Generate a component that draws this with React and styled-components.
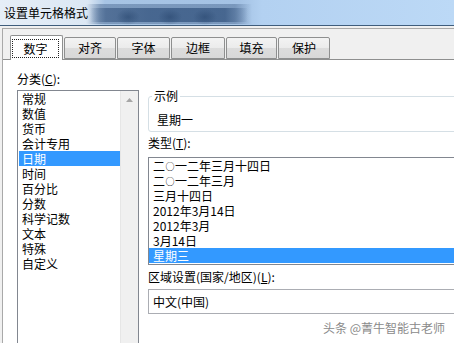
import React from 'react';
import styled, { createGlobalStyle } from 'styled-components';

const Global = createGlobalStyle`
  html, body { margin: 0; padding: 0; }
  body {
    width: 454px; height: 343px; overflow: hidden; background: #f0f0f0;
    font-family: "Noto Sans CJK SC", "Microsoft YaHei", sans-serif;
    font-size: 12px; color: #000;
  }
`;

const Window = styled.div`
  position: relative;
  width: 454px; height: 343px; overflow: hidden;
  display: flex; flex-direction: column; background: #f0f0f0;
`;

const TitleBar = styled.div`
  flex: none; height: 25px; display: flex; align-items: center; padding-left: 4px;
  border-bottom: 1px solid #3f5d7c;
  background-color: #bcd9f6;
  background-image:
    radial-gradient(ellipse 12px 8px at 128px 17px, rgba(40,70,110,0.55), rgba(40,70,110,0)),
    radial-gradient(ellipse 12px 8px at 170px 17px, rgba(40,70,110,0.55), rgba(40,70,110,0)),
    radial-gradient(ellipse 12px 8px at 205px 17px, rgba(40,70,110,0.55), rgba(40,70,110,0)),
    linear-gradient(90deg, rgba(70,100,140,0) 90px, rgba(70,100,140,0.75) 106px, rgba(62,94,136,0.85) 150px, rgba(62,94,136,0.85) 225px, rgba(70,100,140,0) 248px),
    linear-gradient(90deg, rgba(70,100,140,0) 86px, rgba(70,100,140,0.45) 100px, rgba(70,100,140,0.45) 235px, rgba(70,100,140,0) 252px),
    linear-gradient(90deg, #e6eef7 0px, #dbe7f4 88px, #a7c4e4 105px, #a4c2e4 240px, #b3d1f1 262px, #bcd9f6 100%);
  background-size: 100% 100%, 100% 100%, 100% 100%, 100% 14px, 100% 20px, 100% 100%;
  background-position: 0 0, 0 0, 0 0, 0 8px, 0 4px, 0 0;
  background-repeat: no-repeat;
`;

const Title = styled.span`
  font-size: 12px; line-height: 16px; color: #000;
`;

const Frame = styled.div`
  flex: 1; display: flex; flex-direction: column;
  margin: 2px 0 0 2px;
  border-top: 1px solid #a9a9a9; border-left: 1px solid #a9a9a9;
`;

const TabStrip = styled.div`
  flex: none; height: 30px; display: flex; align-items: flex-end; gap: 1px;
  padding-left: 7px; position: relative; z-index: 1;
`;

const Tab = styled.div`
  box-sizing: border-box;
  width: ${p => p.$w}px;
  height: ${p => (p.$active ? 25 : 22)}px;
  margin-bottom: ${p => (p.$active ? -1 : 0)}px;
  border: 1px solid #8e8f8f; border-bottom: ${p => (p.$active ? 'none' : '1px solid #8e8f8f')};
  border-radius: 2px 2px 0 0;
  background: ${p => (p.$active ? '#fff' : 'linear-gradient(#f3f3f3, #ebebeb 50%, #dcdcdc 51%, #d8d8d8)')};
  display: flex; align-items: center; justify-content: center;
  padding: ${p => (p.$active ? '3px 3px 2px 1px' : '0')};
  font-size: 12px; line-height: 16px;
`;

const FocusRing = styled.span`
  flex: 1; align-self: stretch; display: flex; align-items: center; justify-content: center;
  border: 1px dotted #222;
`;

const Panel = styled.div`
  flex: 1; background: #fff; border-top: 1px solid #8e8f8f;
  display: flex; align-items: flex-start; padding-left: 14px;
`;

const LeftCol = styled.div`
  flex: none; width: 122px; display: flex; flex-direction: column;
`;

const Label = styled.div`
  line-height: 16px; font-size: 12px; margin-top: ${p => p.$mt || 0}px;
  u { text-decoration: underline; text-underline-offset: 1px; }
`;

const CatList = styled.div`
  margin-top: 3px; height: 270px; box-sizing: border-box;
  border: 1px solid #828790; display: flex;
`;

const Items = styled.div`
  flex: 1; display: flex; flex-direction: column; padding-left: 1px;
`;

const Item = styled.div`
  height: 15px; line-height: 15px; padding-left: ${p => p.$pl || 3}px; white-space: nowrap;
  background: ${p => (p.$sel ? '#3399ff' : 'transparent')};
  color: ${p => (p.$sel ? '#fff' : '#000')};
`;

const Ring = styled.span`
  font-size: 9px; vertical-align: 1px; margin: 0 0.5px;
`;

const ScrollBar = styled.div`
  flex: none; width: 18px; background: #f0f0f0;
  border-left: 1px solid #e6e6e6; box-sizing: border-box;
  display: flex; flex-direction: column; align-items: center;
`;

const ScrollBtn = styled.div`
  height: 17px; width: 100%; display: flex; align-items: center; justify-content: center;
`;

const RightCol = styled.div`
  flex: none; width: 320px; margin-left: 9px; display: flex; flex-direction: column;
`;

const GroupBox = styled.fieldset`
  margin: 28px 0 0 0; padding: 0 0 4px 3px;
  border: 1px solid #d5dfe5; border-radius: 3px;
  min-width: 0;
`;

const Legend = styled.legend`
  padding: 0 2px; font-size: 12px; line-height: 16px; color: #000;
`;

const Sample = styled.div`
  margin-top: 9px; padding-left: 5px; line-height: 14px;
`;

const TypeList = styled.div`
  margin-top: 6px; border: 1px solid #828790; padding-bottom: 1px;
  display: flex; flex-direction: column;
`;

const Combo = styled.div`
  margin-top: 4px; height: 25px; box-sizing: border-box;
  border: 1px solid #abadb3; display: flex; align-items: center; padding-left: 4px;
`;

const Watermark = styled.div`
  position: absolute; right: 9px; top: 320px;
  font-size: 12px; line-height: 16px; color: #8a8a8a;
  text-shadow: 0 0 2px #fff, 0 0 1px #fff;
`;

const tabs = [
  { t: '数字', w: 53 },
  { t: '对齐', w: 52 },
  { t: '字体', w: 53 },
  { t: '边框', w: 54 },
  { t: '填充', w: 51 },
  { t: '保护', w: 52 },
];

const cats = ['常规', '数值', '货币', '会计专用', '日期', '时间', '百分比', '分数', '科学记数', '文本', '特殊', '自定义'];
const types = [
  <>二<Ring>○</Ring>一二年三月十四日</>,
  <>二<Ring>○</Ring>一二年三月</>,
  '三月十四日', '2012年3月14日', '2012年3月', '3月14日', '星期三',
];

export default function App() {
  return (
    <>
      <Global />
      <Window>
        <TitleBar><Title>设置单元格格式</Title></TitleBar>
        <Frame>
          <TabStrip>
            {tabs.map((tb, i) => (
              <Tab key={tb.t} $w={tb.w} $active={i === 0}>
                {i === 0 ? <FocusRing>{tb.t}</FocusRing> : tb.t}
              </Tab>
            ))}
          </TabStrip>
          <Panel>
            <LeftCol>
              <Label $mt={11}>分类(<u>C</u>):</Label>
              <CatList>
                <Items>
                  {cats.map((c, i) => (
                    <Item key={c} $sel={i === 4}>{c}</Item>
                  ))}
                </Items>
                <ScrollBar>
                  <ScrollBtn>
                    <svg width="7" height="4" viewBox="0 0 7 4">
                      <path d="M0 4 L3.5 0 L7 4 Z" fill="#a6a6a6" />
                    </svg>
                  </ScrollBtn>
                </ScrollBar>
              </CatList>
            </LeftCol>
            <RightCol>
              <GroupBox>
                <Legend>示例</Legend>
                <Sample>星期一</Sample>
              </GroupBox>
              <Label $mt={3}>类型(<u>T</u>):</Label>
              <TypeList>
                {types.map((t, i) => (
                  <Item key={i} $pl={4} $sel={i === 6}>{t}</Item>
                ))}
              </TypeList>
              <Label $mt={4}>区域设置(国家/地区)(<u>L</u>):</Label>
              <Combo>中文(中国)</Combo>
            </RightCol>
          </Panel>
        </Frame>
        <Watermark>头条 @菁牛智能古老师</Watermark>
      </Window>
    </>
  );
}
